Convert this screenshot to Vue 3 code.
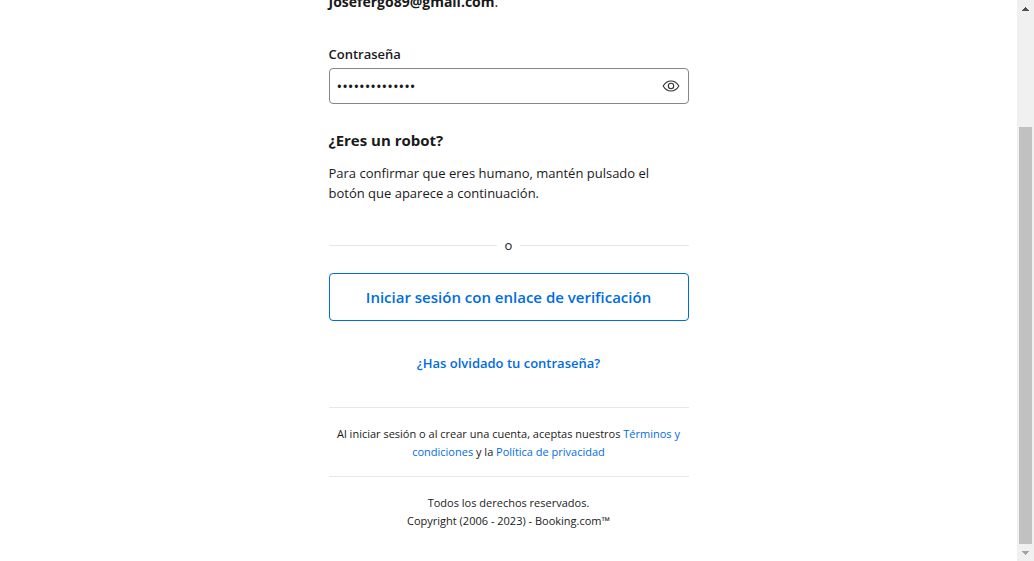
<script setup>
import { ref } from 'vue'

const password = ref('contrasena1234')
const visible = ref(false)
</script>

<template>
  <div class="page">
    <main class="content">
      <form class="panel" @submit.prevent>
        <p class="account"><strong>Josefergo89@gmail.com</strong>.</p>

        <label class="label" for="password">Contraseña</label>
        <div class="field">
          <input id="password" v-model="password" class="input" :type="visible ? 'text' : 'password'" />
          <button class="toggle" type="button" aria-label="Mostrar contraseña" @click="visible = !visible">
            <svg viewBox="0 0 24 24" width="18" height="18" fill="none" stroke="currentColor" stroke-width="1.5" stroke-linecap="round" stroke-linejoin="round" aria-hidden="true">
              <path d="M1.5 12C3.800 8.200 7.700 5.300 12 5.300S20.200 8.200 22.500 12C20.200 15.800 16.300 18.700 12 18.700S3.800 15.800 1.500 12z" />
              <circle cx="12" cy="12" r="3.6" />
            </svg>
          </button>
        </div>

        <h2 class="heading">¿Eres un robot?</h2>
        <p class="hint">Para confirmar que eres humano, mantén pulsado el botón que aparece a continuación.</p>

        <div class="divider"><span>o</span></div>

        <button class="verify" type="button">Iniciar sesión con enlace de verificación</button>
        <a class="forgot" href="#">¿Has olvidado tu contraseña?</a>
      </form>

      <footer class="footer">
        <p class="legal">
          Al iniciar sesión o al crear una cuenta, aceptas nuestros <a href="#">Términos y condiciones</a> y la <a href="#">Política de privacidad</a>
        </p>
        <p class="legal">Todos los derechos reservados.<br />Copyright (2006 - 2023) - Booking.com™</p>
      </footer>
    </main>

    <div class="scrollbar" aria-hidden="true">
      <svg class="arrow" viewBox="0 0 17 17" width="17" height="17" shape-rendering="crispEdges">
        <path d="M8 7h1v1h1v1h1v1h1v1H5v-1h1V9h1V8h1z" fill="#505050" />
      </svg>
      <div class="track">
        <div class="thumb"></div>
      </div>
      <svg class="arrow" viewBox="0 0 17 17" width="17" height="17" shape-rendering="crispEdges">
        <path d="M5 7h7v1h-1v1h-1v1H9v1H8v-1H7V9H6V8H5z" fill="#a3a3a3" />
      </svg>
    </div>
  </div>
</template>

<style>
body {
  background: #fff;
  overflow: hidden;
}
</style>

<style scoped>
.page {
  display: flex;
  height: 100vh;
  overflow: hidden;
  color: #1a1a1a;
  font-family: "Segoe UI", "Open Sans", sans-serif;
  font-size: 13px;
  line-height: 20px;
}
.content {
  flex: 1;
  min-width: 0;
}
.panel,
.footer {
  box-sizing: border-box;
  width: 100%;
  max-width: 360px;
  margin: 0 auto;
}
.panel {
  display: flex;
  flex-direction: column;
}
.account {
  margin: -8px 0 32px;
  font-size: 14px;
}
.label {
  margin-bottom: 4px;
  font-weight: 600;
}
.field {
  display: flex;
  align-items: center;
  box-sizing: border-box;
  height: 36px;
  border: 1px solid #868686;
  border-radius: 4px;
}
.input {
  flex: 1;
  min-width: 0;
  padding: 0 7px;
  border: 0;
  outline: 0;
  background: none;
  color: inherit;
  font: inherit;
  font-size: 15px;
}
.toggle {
  display: flex;
  padding: 8px;
  border: 0;
  background: none;
  color: #333;
}
.heading {
  margin: 24px 0 11px;
  font-size: 15px;
  line-height: 24px;
  font-weight: 700;
}
.hint {
  margin: 0;
}
.divider {
  display: flex;
  align-items: center;
  gap: 8px;
  margin: 32px 0 18px;
}
.divider::before,
.divider::after {
  content: "";
  flex: 1;
  height: 1px;
  background: #e7e7e7;
}
.verify {
  height: 48px;
  border: 1px solid #006ce4;
  border-radius: 4px;
  background: #fff;
  color: #006ce4;
  font: inherit;
  font-size: 15px;
  font-weight: 600;
}
.forgot {
  align-self: center;
  margin: 32px 0 34px;
  color: #006ce4;
  font-weight: 600;
  text-decoration: none;
}
.footer {
  font-size: 11px;
  line-height: 18px;
  text-align: center;
}
.legal {
  margin: 0;
  padding: 17px 0 15px;
  border-top: 1px solid #e7e7e7;
}
.legal a {
  color: #006ce4;
  text-decoration: none;
}
.scrollbar {
  display: flex;
  flex-direction: column;
  width: 17px;
  background: #f0f0f0;
}
.arrow {
  flex: none;
}
.track {
  display: flex;
  flex: 1;
  flex-direction: column;
  justify-content: flex-end;
  padding: 0 2px;
}
.thumb {
  height: 79.2%;
  background: #c1c1c1;
}
</style>
